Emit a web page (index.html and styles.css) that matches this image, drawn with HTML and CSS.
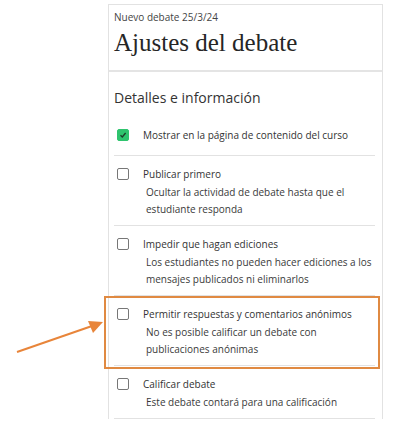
FILE: index.html
```html
<!DOCTYPE html>
<html>

<head>
  <meta charset="UTF-8">
  <meta name="viewport" content="width=device-width, initial-scale=1.0">
  <title>Ajustes del debate</title>
  <link rel="stylesheet" href="styles.css">
</head>

<body>
<div class="page">
  <div class="panel">
    <div class="header">
      <p class="crumb">Nuevo debate 25/3/24</p>
      <h1 class="title">Ajustes del debate</h1>
    </div>

    <div class="section">
      <h2 class="heading">Detalles e información</h2>

      <div class="row row-first">
        <i class="check checked">
          <svg width="8" height="8" viewBox="0 0 8 8"><path d="M1.5 4.2 L3.3 6 L6.6 2" fill="none" stroke="#1d3b2a" stroke-width="1.3"/></svg>
        </i>
        <div class="text">
          <p class="label">Mostrar en la página de contenido del curso</p>
        </div>
      </div>

      <div class="row">
        <i class="check"></i>
        <div class="text">
          <p class="label">Publicar primero</p>
          <p class="desc">Ocultar la actividad de debate hasta que el estudiante responda</p>
        </div>
      </div>

      <div class="row">
        <i class="check"></i>
        <div class="text">
          <p class="label">Impedir que hagan ediciones</p>
          <p class="desc">Los estudiantes no pueden hacer ediciones a los mensajes publicados ni eliminarlos</p>
        </div>
      </div>

      <div class="row marked">
        <i class="check"></i>
        <div class="text">
          <p class="label">Permitir respuestas y comentarios anónimos</p>
          <p class="desc">No es posible calificar un debate con publicaciones anónimas</p>
        </div>
        <span class="highlight"></span>
      </div>

      <div class="row">
        <i class="check"></i>
        <div class="text">
          <p class="label">Calificar debate</p>
          <p class="desc">Este debate contará para una calificación</p>
        </div>
      </div>
    </div>
  </div>

  <!-- flecha de anotación -->
  <svg class="arrow" width="110" height="50" viewBox="0 0 110 50">
    <line x1="17" y1="41" x2="92" y2="15" stroke="#e8853a" stroke-width="2"/>
    <path d="M103 11 L88 10 L93 22 Z" fill="#e8853a"/>
  </svg>
</div>
</body>

</html>
```

FILE: styles.css
```css
* {
  box-sizing: border-box;
}

body {
  margin: 0;
  background: #fff;
  font-family: "Open Sans", "Noto Sans", sans-serif;
  color: #333;
}

p, h1, h2 {
  margin: 0;
  font-weight: normal;
}

.page {
  position: relative;
  width: 393px;
  height: 432px;
  padding: 4px 10px 0 108px;
  overflow: hidden;
}

.panel {
  width: 275px;
  border: 1px solid #e2e2e2;
  border-bottom: none;
}

.header {
  height: 67px;
  padding: 6px 5px 0;
  border-bottom: 2px solid #e4e4e4;
}

.crumb {
  font-size: 10px;
  line-height: 13px;
  color: #444;
}

.title {
  margin-top: 5px;
  font-family: "Liberation Serif", "DejaVu Serif", serif;
  font-size: 25px;
  line-height: 28px;
  color: #262626;
}

.section {
  padding: 0 7px 0 5px;
}

.heading {
  margin-top: 16px;
  font-size: 14px;
  line-height: 20px;
  color: #333;
}

.row {
  position: relative;
  display: flex;
  padding: 9px 0 7px;
  border-bottom: 1px solid #e2e2e2;
}

.row-first {
  padding: 18px 0 11px;
}

.check {
  flex: none;
  display: inline-flex;
  align-items: center;
  justify-content: center;
  width: 12px;
  height: 12px;
  margin: 3px 14px 0 3px;
  border: 1px solid #777;
  border-radius: 2px;
  background: #fff;
}

.check.checked {
  border-color: #2fc46e;
  background: #2fc46e;
}

.label {
  font-size: 10px;
  line-height: 18px;
  color: #333;
}

.desc {
  margin-top: 1px;
  padding-left: 3px;
  font-size: 10px;
  line-height: 17px;
  color: #3a3a3a;
}

.highlight {
  position: absolute;
  left: -10px;
  right: -5px;
  top: 0;
  bottom: -4px;
  border: 2px solid #e08a42;
}

.arrow {
  position: absolute;
  left: 0;
  top: 311px;
}
```
